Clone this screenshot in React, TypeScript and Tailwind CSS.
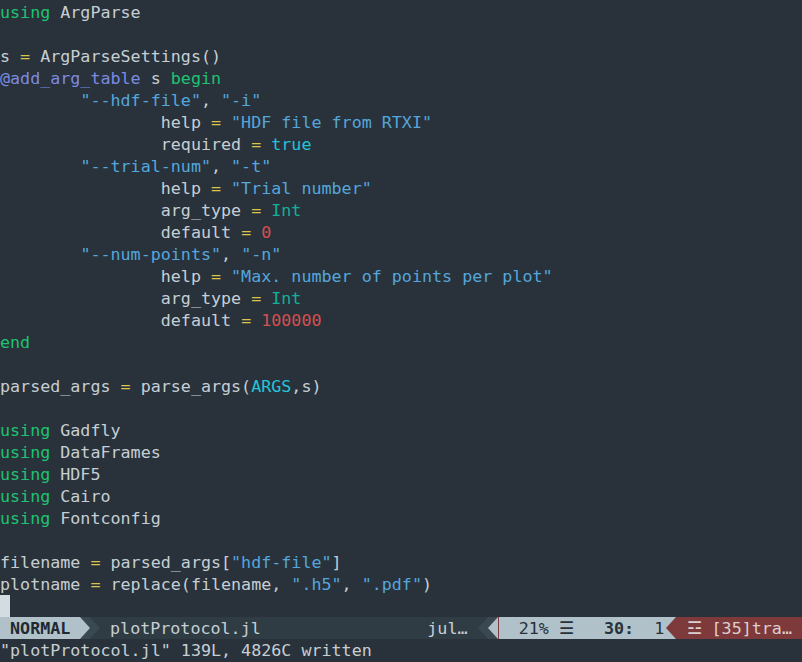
import React from "react";

type Seg = [string, string];

const fg = "text-[#c6ced4]";
const kw = "text-[#1fc272]";
const str = "text-[#54a6dc]";
const op = "text-[#dac44c]";
const cyan = "text-[#22c4d8]";
const typ = "text-[#14af98]";
const num = "text-[#d45050]";
const macro = "text-[#7c8be2]";

const I1 = "        ";
const I2 = "                ";

const lines: Seg[][] = [
  [["using", kw], [" ArgParse", fg]],
  [],
  [["s ", fg], ["=", op], [" ArgParseSettings()", fg]],
  [["@add_arg_table", macro], [" s ", fg], ["begin", kw]],
  [[I1, fg], ['"--hdf-file"', str], [", ", fg], ['"-i"', str]],
  [[I2 + "help ", fg], ["=", op], [" ", fg], ['"HDF file from RTXI"', str]],
  [[I2 + "required ", fg], ["=", op], [" ", fg], ["true", cyan]],
  [[I1, fg], ['"--trial-num"', str], [", ", fg], ['"-t"', str]],
  [[I2 + "help ", fg], ["=", op], [" ", fg], ['"Trial number"', str]],
  [[I2 + "arg_type ", fg], ["=", op], [" ", fg], ["Int", typ]],
  [[I2 + "default ", fg], ["=", op], [" ", fg], ["0", num]],
  [[I1, fg], ['"--num-points"', str], [", ", fg], ['"-n"', str]],
  [[I2 + "help ", fg], ["=", op], [" ", fg], ['"Max. number of points per plot"', str]],
  [[I2 + "arg_type ", fg], ["=", op], [" ", fg], ["Int", typ]],
  [[I2 + "default ", fg], ["=", op], [" ", fg], ["100000", num]],
  [["end", kw]],
  [],
  [["parsed_args ", fg], ["=", op], [" parse_args(", fg], ["ARGS", cyan], [",s)", fg]],
  [],
  [["using", kw], [" Gadfly", fg]],
  [["using", kw], [" DataFrames", fg]],
  [["using", kw], [" HDF5", fg]],
  [["using", kw], [" Cairo", fg]],
  [["using", kw], [" Fontconfig", fg]],
  [],
  [["filename ", fg], ["=", op], [" parsed_args[", fg], ['"hdf-file"', str], ["]", fg]],
  [["plotname ", fg], ["=", op], [" replace(filename, ", fg], ['".h5"', str], [", ", fg], ['".pdf"', str], [")", fg]],
];

function Arrow({ dir, color, bg }: { dir: "right" | "left"; color: string; bg: string }) {
  const pts = dir === "right" ? "0,0 10,11 0,22" : "10,0 0,11 10,22";
  return (
    <svg width="10" height="22" viewBox="0 0 10 22" className="block shrink-0">
      <rect width="10" height="22" fill={bg} />
      <polygon points={pts} fill={color} />
    </svg>
  );
}

const LIGHT = "#b1c1c9";
const MID = "#3a4851";
const DARK = "#2f3c44";
const RED = "#7e3a3a";

export default function App() {
  return (
    <div
      className="w-[802px] h-[662px] bg-[#29323a] pt-[1px] overflow-hidden text-[16.7px] leading-[22px] whitespace-pre"
      style={{ fontFamily: '"DejaVu Sans Mono", "Liberation Mono", monospace' }}
    >
      {lines.map((segs, i) => (
        <div key={i} className="h-[22px]">
          {segs.map(([t, c], j) => (
            <span key={j} className={c}>
              {t}
            </span>
          ))}
        </div>
      ))}

      <div className="h-[22px]">
        <div className="w-[10px] h-[22px] bg-[#d2dce1]" />
      </div>

      <div className="h-[22px] flex bg-[#2f3c44]">
        <div className="w-[80px] bg-[#b1c1c9] text-[#1f2a32] font-bold">{" NORMAL "}</div>
        <Arrow dir="right" color={LIGHT} bg={MID} />
        <Arrow dir="right" color={MID} bg={DARK} />
        <div className="w-[380px] flex justify-between text-[#c6ced4]">
          <span>{" plotProtocol.jl"}</span>
          <span>{"jul… "}</span>
        </div>
        <Arrow dir="left" color={MID} bg={DARK} />
        <Arrow dir="left" color={LIGHT} bg={MID} />
        <div className="w-[170px] flex bg-[#b1c1c9] text-[#26323a] border-l border-[#7e3a3a]">
          <span>{"  21% ☰   "}</span>
          <span className="font-bold">{"30:"}</span>
          <span>{"  1"}</span>
        </div>
        <Arrow dir="left" color={RED} bg={LIGHT} />
        <div className="flex-1 bg-[#7e3a3a] text-[#dccfcf]">{" ☲ [35]tra… "}</div>
      </div>

      <div className="h-[22px] text-[#c6ced4]">{'"plotProtocol.jl" 139L, 4826C written'}</div>
    </div>
  );
}
